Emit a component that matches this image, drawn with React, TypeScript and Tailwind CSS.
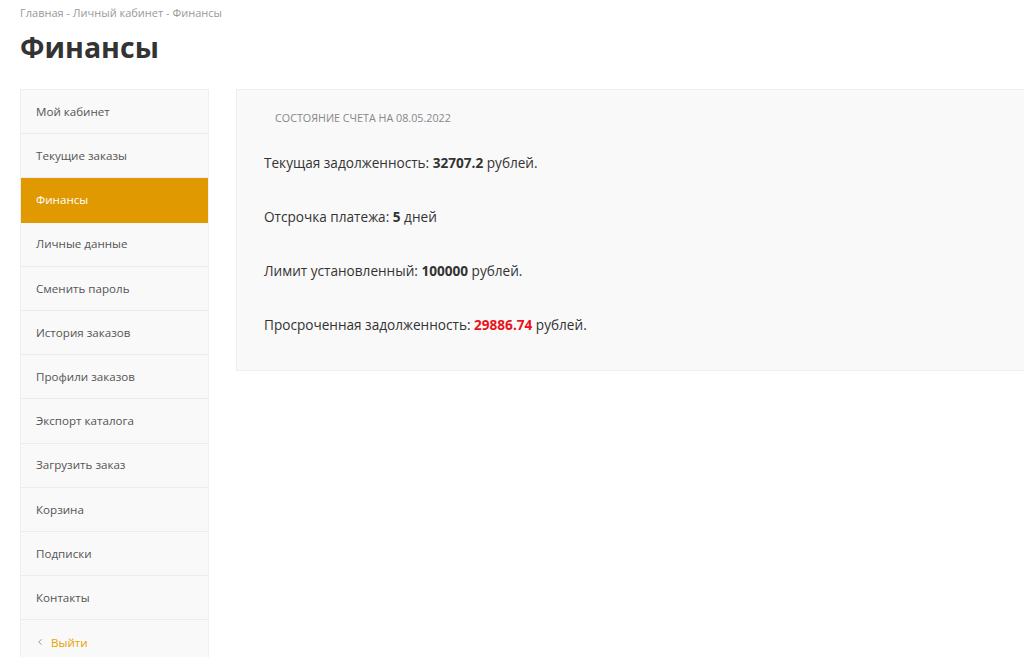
import { ChevronLeft } from 'lucide-react'

const menu = [
  'Мой кабинет',
  'Текущие заказы',
  'Финансы',
  'Личные данные',
  'Сменить пароль',
  'История заказов',
  'Профили заказов',
  'Экспорт каталога',
  'Загрузить заказ',
  'Корзина',
  'Подписки',
  'Контакты',
]

function Row({ label, children }: { label: string; children: React.ReactNode }) {
  return (
    <p className="h-[54px] text-[13.6px] leading-[18px] text-[#333]">
      {label} {children}
    </p>
  )
}

export default function App() {
  return (
    <div
      className="w-[1024px] h-[657px] overflow-hidden bg-white"
      style={{ fontFamily: '"Open Sans", sans-serif' }}
    >
      <div className="px-5 pt-[5px]">
        <div className="text-[11px] leading-[16px] text-[#999]">
          Главная - Личный кабинет - Финансы
        </div>
        <h1 className="mt-[9px] text-[28.5px] leading-[34px] font-bold text-[#333]">Финансы</h1>
      </div>

      <div className="flex gap-[27px] pl-5 mt-[25px]">
        <nav className="w-[189px] shrink-0 border border-[#efefef] bg-[#f9f9f9]">
          {menu.map((m) => (
            <div
              key={m}
              className={
                m === 'Финансы'
                  ? 'h-[44.2px] flex items-center px-[15px] text-[11.6px] text-white bg-[#e09900] border-b border-[#e09900]'
                  : 'h-[44.2px] flex items-center px-[15px] text-[11.6px] text-[#555] border-b border-[#ececec]'
              }
            >
              {m}
            </div>
          ))}
          <div className="h-[44px] flex items-center px-[14px] text-[11.6px] text-[#e8a200]">
            <ChevronLeft size={10} className="text-[#888] mr-[6px]" strokeWidth={2} />
            Выйти
          </div>
        </nav>

        <section className="w-[820px] h-[282px] shrink-0 border border-[#efefef] bg-[#f9f9f9] pl-[27px] pt-[20px]">
          <div className="pl-[11px] text-[10.75px] leading-[16px] uppercase text-[#888]">
            Состояние счета на 08.05.2022
          </div>
          <div className="mt-[28px]">
            <Row label="Текущая задолженность:">
              <b className="font-bold">32707.2</b> рублей.
            </Row>
            <Row label="Отсрочка платежа:">
              <b className="font-bold">5</b> дней
            </Row>
            <Row label="Лимит установленный:">
              <b className="font-bold">100000</b> рублей.
            </Row>
            <Row label="Просроченная задолженность:">
              <b className="font-bold text-[#e8131a]">29886.74</b> рублей.
            </Row>
          </div>
        </section>
      </div>
    </div>
  )
}
